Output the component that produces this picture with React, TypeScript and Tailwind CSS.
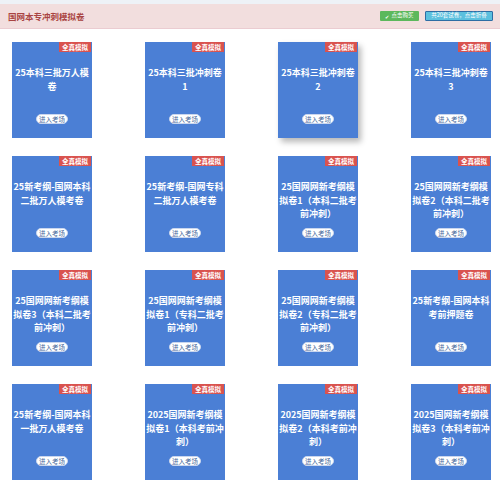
const papers: string[][] = [
  ["25本科三批万人模", "卷"],
  ["25本科三批冲刺卷", "1"],
  ["25本科三批冲刺卷", "2"],
  ["25本科三批冲刺卷", "3"],
  ["25新考纲-国网本科", "二批万人模考卷"],
  ["25新考纲-国网专科", "二批万人模考卷"],
  ["25国网网新考纲模", "拟卷1（本科二批考", "前冲刺）"],
  ["25国网网新考纲模", "拟卷2（本科二批考", "前冲刺）"],
  ["25国网网新考纲模", "拟卷3（本科二批考", "前冲刺）"],
  ["25国网网新考纲模", "拟卷1（专科二批考", "前冲刺）"],
  ["25国网网新考纲模", "拟卷2（专科二批考", "前冲刺）"],
  ["25新考纲-国网本科", "考前押题卷"],
  ["25新考纲-国网本科", "一批万人模考卷"],
  ["2025国网新考纲模", "拟卷1（本科考前冲", "刺）"],
  ["2025国网新考纲模", "拟卷2（本科考前冲", "刺）"],
  ["2025国网新考纲模", "拟卷3（本科考前冲", "刺）"],
];

function PaperCard({ lines, hovered }: { lines: string[]; hovered?: boolean }) {
  return (
    <div
      className={
        "relative flex h-[96px] w-[80px] flex-col items-center bg-[#4b7fd5] pt-[24px] pb-[14px] " +
        (hovered ? "shadow-[3px_4px_6px_rgba(0,0,0,0.28)]" : "")
      }
    >
      <span className="absolute right-[1px] top-0 flex h-[10px] items-center bg-[#d9534f] px-[3px] text-[6.5px] font-bold leading-none text-white">
        全真模拟
      </span>
      <div className="text-center text-[9px] font-bold leading-[13.5px] whitespace-nowrap text-white">
        {lines.map((l) => (
          <div key={l}>{l}</div>
        ))}
      </div>
      <button className="mt-auto flex h-[10px] w-[32px] items-center justify-center rounded-full border border-[#c9d6ee] bg-white text-[6.5px] leading-none text-[#4a6a9c]">
        进入考场
      </button>
    </div>
  );
}

export default function App() {
  return (
    <div className="h-[500px] w-[500px] bg-white font-['Noto_Sans_CJK_SC','Noto_Sans',sans-serif]">
      <div className="border-t-[4px] border-[#eef2f7]">
        <div className="flex h-[25px] items-center justify-between border-b border-[#ebccd1] bg-[#f2dede] pl-[8px] pr-[7px]">
          <span className="text-[8.5px] font-bold text-[#a94442]">国网本专冲刺模拟卷</span>
          <div className="flex items-center gap-[6px]">
            <span className="flex h-[10px] w-[39px] items-center justify-center gap-[2px] rounded-[1px] bg-[#5cb85c] text-[5.5px] leading-none text-white">
              <span className="text-[5px]">✔</span>点击购买
            </span>
            <span className="flex h-[10px] w-[68px] items-center justify-center rounded-[1px] border border-[#2e6da4] bg-[#5bc0de] text-[5.5px] leading-none text-white">
              共20套试卷，点击折叠
            </span>
          </div>
        </div>
      </div>
      <div className="grid grid-cols-[repeat(4,80px)] gap-x-[53px] gap-y-[18px] px-[12px] pt-[13px]">
        {papers.map((lines, i) => (
          <PaperCard key={i} lines={lines} hovered={i === 2} />
        ))}
      </div>
    </div>
  );
}
